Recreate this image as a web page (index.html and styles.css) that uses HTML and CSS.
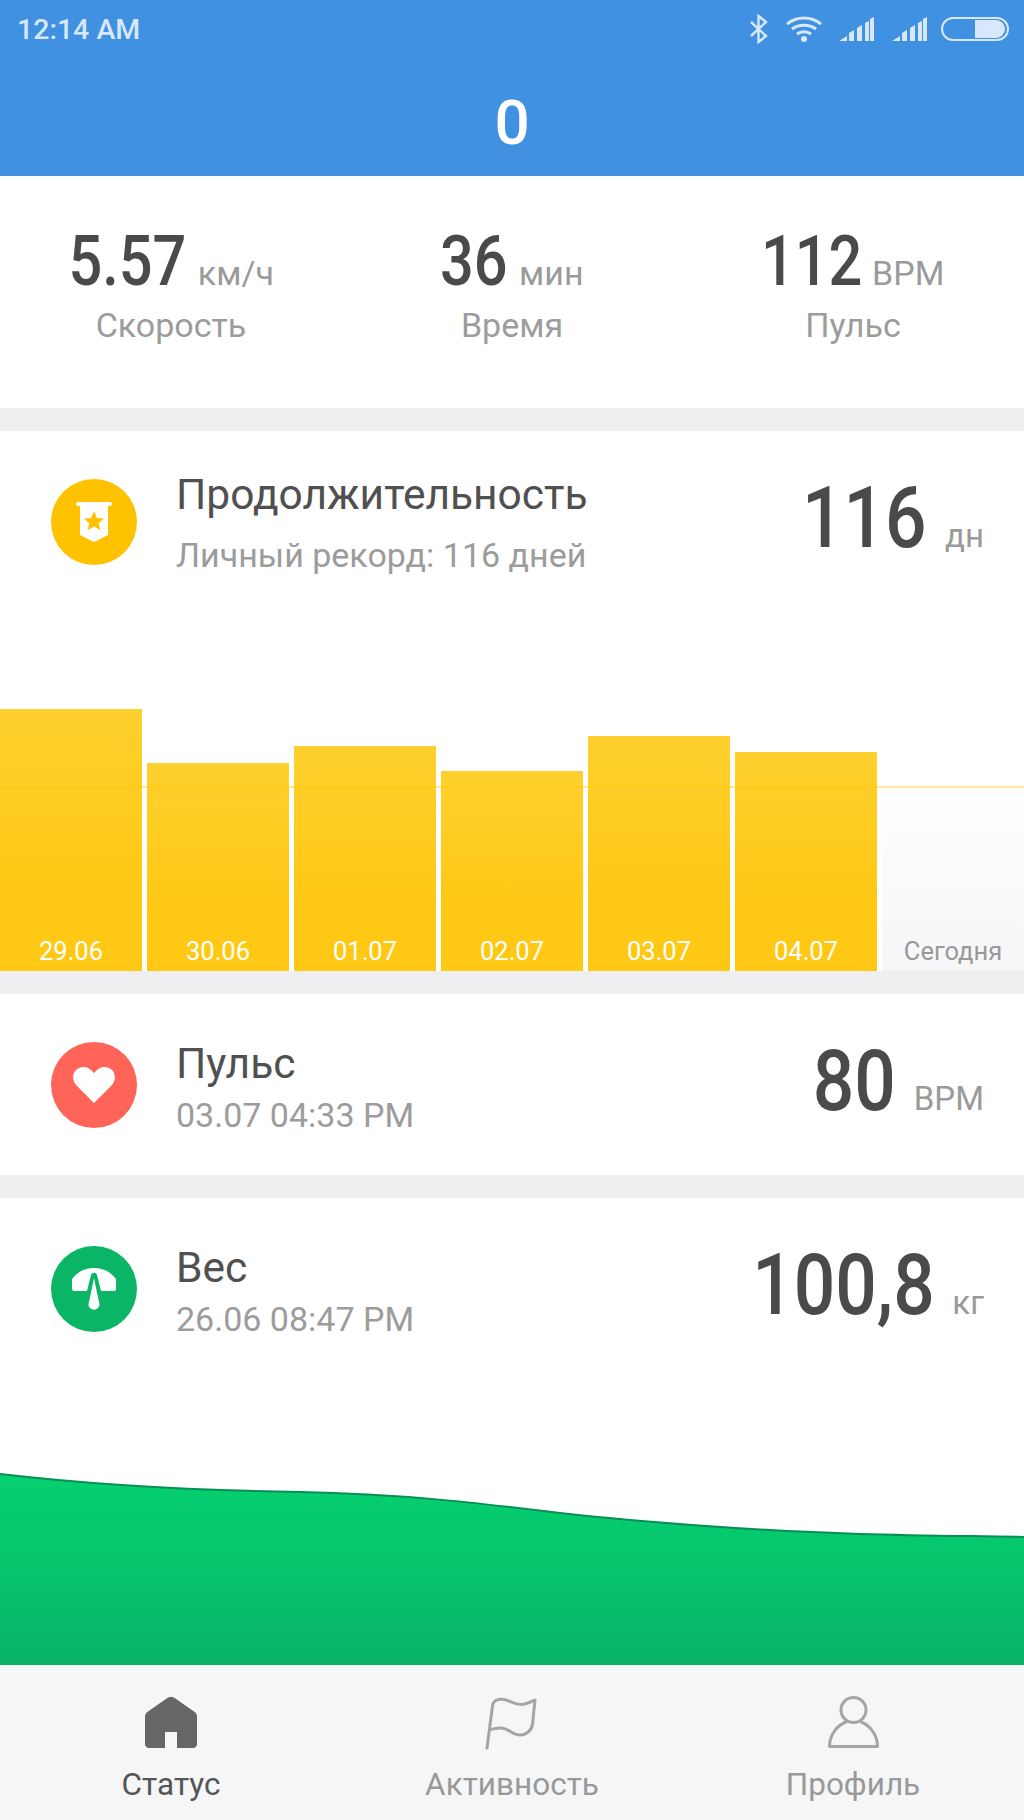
FILE: index.html
```html
<!DOCTYPE html>
<html>
  <head>
    <title>Статус</title>
    <meta name="viewport" content="width=device-width, initial-scale=1.0" />
    <link rel="stylesheet" href="styles.css">
  </head>
  <body>
    <header class="top">
      <div class="status">
        <span class="clock">12:14 AM</span>
        <div class="status-icons">
          <svg width="20" height="30" viewBox="0 0 20 30" fill="none" stroke="#d8e8fa" stroke-width="2.4"><path d="M2 8l15 14-7.500 6V2L17 8 2 22"/></svg>
          <svg width="36" height="26" viewBox="0 0 36 26" fill="none" stroke="#d8e8fa" stroke-width="3"><path d="M1 8c10-8 24-8 34 0M6 13c7-5 17-5 24 0M11 18c4-3 10-3 14 0"/><circle cx="18" cy="23" r="3" fill="#d8e8fa" stroke="none"/></svg>
          <svg width="36" height="26" viewBox="0 0 36 26" fill="#d8e8fa"><path d="M0 25l8-5v5zM10 25v-8l5-3v11zM18 25V12l5-3v16zM26 25V7l4-2v20zM31 25V3l4-2v24z"/></svg>
          <svg width="36" height="26" viewBox="0 0 36 26" fill="#d8e8fa"><path d="M0 25l8-5v5zM10 25v-8l5-3v11zM18 25V12l5-3v16zM26 25V7l4-2v20zM31 25V3l4-2v24z"/></svg>
          <div class="battery"><div class="battery-fill"></div></div>
        </div>
      </div>
      <div class="steps">0</div>
    </header>

    <section class="stats">
      <div class="stat">
        <div class="stat-value"><b class="num-wide">5.57</b><span>км/ч</span></div>
        <div class="stat-label">Скорость</div>
      </div>
      <div class="stat">
        <div class="stat-value"><b class="num-narrow">36</b><span>мин</span></div>
        <div class="stat-label">Время</div>
      </div>
      <div class="stat">
        <div class="stat-value"><b class="num-wide">112</b><span>BPM</span></div>
        <div class="stat-label">Пульс</div>
      </div>
    </section>

    <section class="card card-duration">
      <div class="row">
        <div class="badge badge-yellow">
          <svg width="36" height="42" viewBox="0 0 36 42"><rect width="36" height="4" y="1" rx="2" fill="#fff"/><path d="M4 3h28v31l-14 7-14-7z" fill="#fff"/><path d="M18 10l3 7 7 .6-5.300 4.700 1.700 7-6.400-3.800-6.400 3.800 1.700-7L8 17.600l7-.6z" fill="#ffc200"/></svg>
        </div>
        <div class="row-text">
          <div class="row-title">Продолжительность</div>
          <div class="row-sub">Личный рекорд: 116 дней</div>
        </div>
        <div class="row-value"><b>116</b><span>дн</span></div>
      </div>
      <div class="bars">
        <div class="goal"></div>
        <div class="bar" style="height: 262px">29.06</div>
        <div class="bar" style="height: 208px">30.06</div>
        <div class="bar" style="height: 225px">01.07</div>
        <div class="bar" style="height: 200px">02.07</div>
        <div class="bar" style="height: 235px">03.07</div>
        <div class="bar" style="height: 219px">04.07</div>
        <div class="bar bar-today">Сегодня</div>
      </div>
    </section>

    <section class="card card-pulse">
      <div class="row">
        <div class="badge badge-red">
          <svg width="42" height="36" viewBox="0 0 42 36"><path d="M21 36L4 19C-1 14-1 7 3 3c4-4 11-4 15 0l3 3 3-3c4-4 11-4 15 0s4 11-1 16z" fill="#fff"/></svg>
        </div>
        <div class="row-text">
          <div class="row-title">Пульс</div>
          <div class="row-sub">03.07 04:33 PM</div>
        </div>
        <div class="row-value"><b>80</b><span>BPM</span></div>
      </div>
    </section>

    <section class="card card-weight">
      <div class="row">
        <div class="badge badge-green">
          <svg width="44" height="42" viewBox="0 0 44 42"><path d="M0 11C5 4 13 0 22 0s17 4 22 11v10c0 1-1 2-2 2H29l-4-16c-1-3-5-3-6 0l-4 16H2c-1 0-2-1-2-2z" fill="#fff"/><path d="M22 10l5 24a5.500 5.500 0 1 1-10 0z" fill="#fff"/></svg>
        </div>
        <div class="row-text">
          <div class="row-title">Вес</div>
          <div class="row-sub">26.06 08:47 PM</div>
        </div>
        <div class="row-value"><b>100,8</b><span>кг</span></div>
      </div>
      <svg class="area" width="1024" height="192" viewBox="0 0 1024 192" preserveAspectRatio="none">
        <defs>
          <linearGradient id="weightFill" x1="0" y1="0" x2="0" y2="1">
            <stop offset="0" stop-color="#06d070"/>
            <stop offset="0.5" stop-color="#06c56b"/>
            <stop offset="1" stop-color="#08b266"/>
          </linearGradient>
        </defs>
        <path d="M0 1C60 8 160 17 300 19C400 21 470 29 560 40C640 49 760 58 860 61C930 63 980 63 1024 64V192H0z" fill="url(#weightFill)"/>
        <path d="M0 1C60 8 160 17 300 19C400 21 470 29 560 40C640 49 760 58 860 61C930 63 980 63 1024 64" fill="none" stroke="#078f56" stroke-width="2"/>
      </svg>
    </section>

    <nav class="tabs">
      <div class="tab tab-active">
        <svg width="54" height="54" viewBox="-1 -1 54 54"><path d="M22 1.200c2-1.600 6-1.600 8 0L49 14.500c2 1.300 3 3 3 5V47c0 2-1.500 4-4 4H32V35H20v16H4c-2.500 0-4-2-4-4V19.500c0-2 1-3.700 3-5z" fill="#666"/></svg>
        <span>Статус</span>
      </div>
      <div class="tab">
        <svg width="54" height="54" viewBox="0 0 54 54" fill="none" stroke="#a5a5a5" stroke-width="3" stroke-linecap="round" stroke-linejoin="round"><path d="M2 52L7.500 10C8 6 10 4 14 3.500C24 2 27 9 37 8.500C42 8.200 46 6 50 4L47.500 28C47 34 42 38.500 35 39C26 39 24 31 14 32C10 32.500 7 33 5 34"/></svg>
        <span>Активность</span>
      </div>
      <div class="tab">
        <svg width="54" height="54" viewBox="0 0 54 54" fill="none" stroke="#a5a5a5" stroke-width="3" stroke-linejoin="round"><circle cx="27.500" cy="14" r="12.500"/><path d="M21 25.500C11 29 3.500 39 3.500 50.500h48C51.500 39 44 29 34 25.500"/></svg>
        <span>Профиль</span>
      </div>
    </nav>
  </body>
</html>
```
FILE: styles.css
```css
body {
  margin: 0;
  width: 1024px;
  height: 1820px;
  overflow: hidden;
  background-color: #eeeff1;
  font-family: Roboto, "Liberation Sans", sans-serif;
  display: flex;
  flex-direction: column;
}
b {
  font-weight: 500;
  display: inline-block;
}

/* шапка */
.top {
  height: 176px;
  flex: none;
  background-color: #4091e2;
  color: #fff;
}
.status {
  height: 58px;
  padding: 0 15px 0 17px;
  display: flex;
  justify-content: space-between;
  align-items: center;
}
.clock {
  font-size: 28.500px;
  font-weight: 500;
  color: #d8e8fa;
}
.status-icons {
  display: flex;
  align-items: center;
  gap: 17px;
}
.battery {
  width: 58px;
  height: 18px;
  border: 2px solid #d8e8fa;
  border-radius: 12px;
  padding: 1px 2px 1px 4px;
  margin-left: -4px;
  display: flex;
  justify-content: flex-end;
}
.battery-fill {
  width: 30px;
  background-color: #d8e8fa;
  border-radius: 0 9px 9px 0;
}
.steps {
  text-align: center;
  font-size: 62px;
  line-height: 70px;
  margin-top: 30px;
  font-weight: 500;
}

/* верхняя статистика */
.stats {
  height: 232px;
  flex: none;
  background-color: #fff;
  display: grid;
  grid-template-columns: 342px 340px 342px;
  text-align: center;
  margin-bottom: 23px;
}
.stat-value {
  margin-top: 49px;
  font-size: 34px;
  line-height: 72px;
  color: #9a9a9a;
  display: flex;
  justify-content: center;
  align-items: baseline;
  gap: 11px;
}
.stat-value b {
  font-size: 70px;
  color: #4a4a4a;
  transform: scaleX(0.85);
}
.num-wide {
  margin: 0 -10px;
}
.num-narrow {
  margin: 0 -6px;
}
.stat-label {
  font-size: 34px;
  line-height: 40px;
  margin-top: -4px;
  color: #9c9c9c;
}

/* карточки */
.card {
  background-color: #fff;
  flex: none;
  margin-bottom: 23px;
}
.card-duration {
  height: 540px;
  position: relative;
  overflow: hidden;
}
.card-pulse {
  height: 181px;
}
.card-weight {
  height: 467px;
  margin-bottom: 0;
}
.row {
  display: flex;
  padding: 48px 40px 0 51px;
  align-items: flex-start;
}
.badge {
  width: 86px;
  height: 86px;
  border-radius: 50%;
  flex: none;
  display: flex;
  align-items: center;
  justify-content: center;
}
.badge-yellow {
  background-color: #ffc200;
}
.badge-red {
  background-color: #ff6459;
}
.badge-green {
  background-color: #0ab665;
}
.row-text {
  margin-left: 39px;
  flex: 1;
}
.row-title {
  font-size: 42.500px;
  line-height: 44px;
  color: #505050;
}
.row-sub {
  font-size: 34px;
  line-height: 44px;
  margin-top: 7px;
  color: #9c9c9c;
}
.card-duration .row-title {
  margin-top: -6px;
}
.card-duration .row-sub {
  margin-top: 16px;
}
.row-value {
  font-size: 33px;
  line-height: 90px;
  color: #9a9a9a;
  margin-top: -6px;
  display: flex;
  align-items: baseline;
  gap: 18px;
}
.row-value b {
  font-size: 86px;
  color: #4a4a4a;
  transform: scaleX(0.85);
  transform-origin: right;
}

/* столбики */
.bars {
  position: absolute;
  left: 0;
  right: 0;
  bottom: 0;
  display: flex;
  align-items: flex-end;
  gap: 5px;
}
.bar {
  width: 142px;
  flex: none;
  box-sizing: border-box;
  background: linear-gradient(#ffd02e, #ffc814 70%);
  color: #fff;
  font-size: 25.500px;
  line-height: 26px;
  padding-bottom: 7px;
  display: flex;
  align-items: flex-end;
  justify-content: center;
}
.bar-today {
  height: 184px;
  color: #999;
  background: linear-gradient(#fff, #f6f6f8);
}
.goal {
  position: absolute;
  left: 0;
  right: 0;
  bottom: 183px;
  height: 2px;
  background-color: rgba(255, 200, 0, 0.4);
}

/* график веса */
.area {
  display: block;
  margin-top: 96px;
}
.card-weight .row {
  height: 131px;
}

/* нижние вкладки */
.tabs {
  height: 155px;
  flex: none;
  background-color: #f5f6f8;
  display: grid;
  grid-template-columns: 342px 340px 342px;
}
.tab {
  display: flex;
  flex-direction: column;
  align-items: center;
  padding-top: 31px;
  font-size: 31.500px;
  color: #999;
}
.tab span {
  margin-top: 16px;
}
.tab-active {
  color: #555;
}
```
